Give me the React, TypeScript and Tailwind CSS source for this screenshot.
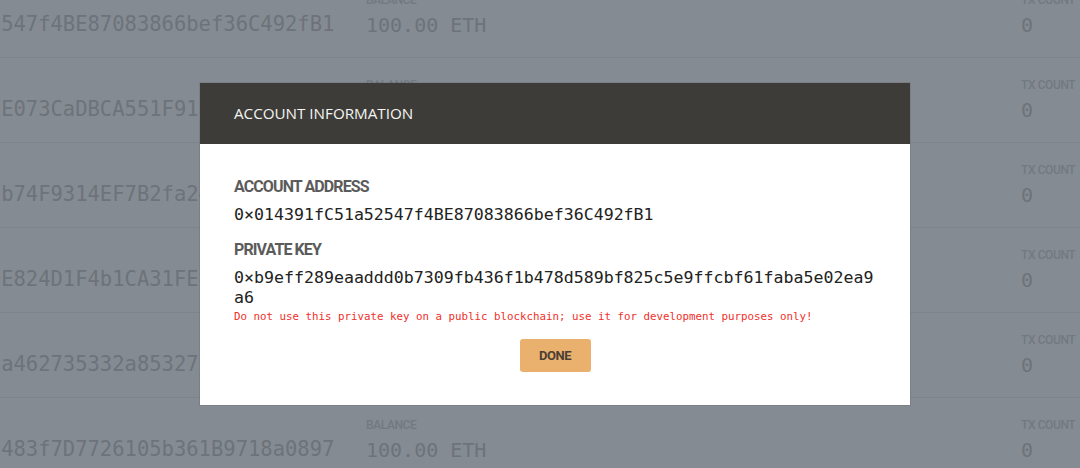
import React from "react";

const rows = [
  "0x014391fC51a52547f4BE87083866bef36C492fB1",
  "0x9aB21e0C7d4f3E073CaDBCA551F91c3a8b62D04e",
  "0x6e2D0a91cF4b8b74F9314EF7B2fa24c1e9A03d7b",
  "0x3F8a0d5B2c971E824D1F4b1CA31FE8a0b3C5d2e6",
  "0xc07E4b9a2D1f5a462735332a853271Bd0E9f4c8a",
  "0xA19d6c0E5b3f2483f7D7726105b361B9718a0897",
];

const mono = "font-['DejaVu_Sans_Mono','Liberation_Mono',monospace]";
const cond = "font-['Roboto','Liberation_Sans',sans-serif]";

function AccountRow({ address }: { address: string }) {
  return (
    <div className="flex h-[85px] items-stretch border-b border-[#7e848b]">
      <div className="flex w-[366px] items-center overflow-hidden whitespace-nowrap pt-[18px]">
        <span className={`${mono} -ml-[184px] text-[20.5px] text-[#6d737a]`}>{address}</span>
      </div>
      <div className="flex flex-1 flex-col justify-center">
        <span className={`${cond} text-[12px] font-medium uppercase leading-[14px] tracking-[-0.4px] text-[#737980]`}>
          Balance
        </span>
        <span className={`${mono} mt-[6px] text-[20px] leading-[24px] text-[#6d737a]`}>100.00 ETH</span>
      </div>
      <div className="flex w-[59px] flex-col justify-center">
        <span className={`${cond} text-[12px] font-medium uppercase leading-[14px] tracking-[-0.4px] text-[#737980]`}>
          Tx Count
        </span>
        <span className={`${mono} mt-[6px] text-[20px] leading-[24px] text-[#6d737a]`}>0</span>
      </div>
    </div>
  );
}

export default function App() {
  return (
    <div className="relative h-[468px] w-[1080px] overflow-hidden bg-[#858b92]">
      <div className="-mt-[27px]">
        {rows.map((a) => (
          <AccountRow key={a} address={a} />
        ))}
      </div>

      <div className="absolute left-[200px] top-[83px] w-[710px] bg-white shadow-[0_0_0_1px_rgba(0,0,0,0.08)]">
        <div className="flex h-[61px] items-center bg-[#3e3c38] px-[34px]">
          <h1 className="font-['Open_Sans',sans-serif] text-[15.2px] font-normal text-[#f4f4f2]">
            ACCOUNT INFORMATION
          </h1>
        </div>
        <div className="px-[34px] pb-[33px] pt-[33px]">
          <h2 className={`${cond} text-[16px] font-bold leading-[20px] tracking-[-0.9px] text-[#5b5b5b]`}>
            ACCOUNT ADDRESS
          </h2>
          <p className={`${mono} mt-[8px] text-[16.6px] leading-[20px] text-[#222]`}>
            0×014391fC51a52547f4BE87083866bef36C492fB1
          </p>
          <h2 className={`${cond} mt-[15px] text-[16px] font-bold leading-[20px] tracking-[-0.9px] text-[#5b5b5b]`}>
            PRIVATE KEY
          </h2>
          <p className={`${mono} mt-[8px] break-all text-[16.6px] leading-[20px] text-[#222]`}>
            0×b9eff289eaaddd0b7309fb436f1b478d589bf825c5e9ffcbf61faba5e02ea9a6
          </p>
          <p className={`${mono} mt-[2px] text-[10.8px] leading-[14px] text-[#f0302a]`}>
            Do not use this private key on a public blockchain; use it for development purposes only!
          </p>
          <div className="mt-[15px] flex justify-center">
            <button
              className={`${cond} h-[33px] w-[71px] rounded-[3px] bg-[#e9b06e] text-[13px] font-bold tracking-[-0.5px] text-[#4b3e34]`}
            >
              DONE
            </button>
          </div>
        </div>
      </div>
    </div>
  );
}
